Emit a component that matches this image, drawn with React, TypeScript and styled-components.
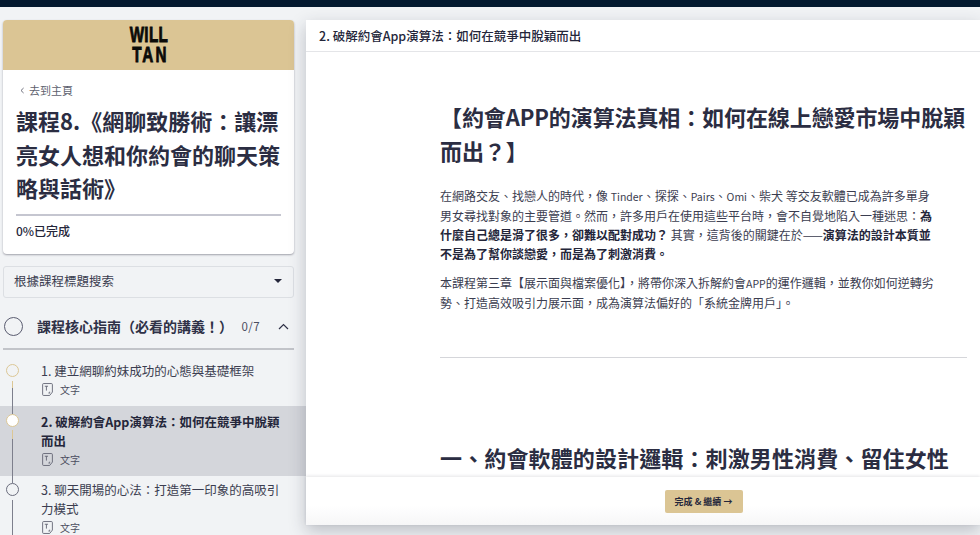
import React from 'react'
import styled, { createGlobalStyle } from 'styled-components'

const CJK = `"Noto Sans CJK TC", "Noto Sans", sans-serif`
const gold = '#dbc594'
const ink = '#2b2d42'

const GlobalStyle = createGlobalStyle`
  html, body, #root {
    margin: 0;
    height: 100%;
    overflow: hidden;
  }
  body {
    background: #f1f3f5;
    font-family: ${CJK};
    color: ${ink};
  }
  * { box-sizing: border-box; }
`

const Page = styled.div`
  height: 535px;
  display: flex;
  flex-direction: column;
  overflow: hidden;
`

const TopBar = styled.div`
  height: 7px;
  flex: none;
  background: #03192f;
`

const Columns = styled.div`
  flex: 1;
  min-height: 0;
  display: flex;
  gap: 12px;
  padding: 13px 0 0 3px;
`

const Sidebar = styled.aside`
  width: 291px;
  flex: none;
  display: flex;
  flex-direction: column;
`

const CourseCard = styled.section`
  height: 234px;
  flex: none;
  background: #fff;
  border-radius: 4px;
  overflow: hidden;
  box-shadow: 0 1px 2px rgba(40, 42, 60, 0.4);
`

const Brand = styled.div`
  height: 50px;
  background: ${gold};
  display: flex;
  flex-direction: column;
  justify-content: center;
  align-items: center;
`

const LogoLine = styled.div<{ $spacing: number }>`
  font-family: "Liberation Sans", sans-serif;
  font-weight: 700;
  font-size: 22px;
  line-height: 20px;
  color: #0b0b08;
  letter-spacing: ${({ $spacing }) => $spacing}px;
  margin-right: -${({ $spacing }) => $spacing}px;
  -webkit-text-stroke: 0.9px #0b0b08;
  transform: scaleX(0.69);
`

const CardBody = styled.div`
  padding: 11px 13px 0;
`

const BackLink = styled.div`
  display: flex;
  align-items: center;
  gap: 3px;
  padding-left: 3px;
  font-size: 11px;
  line-height: 18px;
  color: #5d5f6e;
`

const CourseTitle = styled.h1`
  margin: 5px 0 0;
  font-size: 22px;
  line-height: 33.5px;
  font-weight: 700;
  color: ${ink};
`

const ProgressTrack = styled.div`
  height: 2px;
  margin-top: 9px;
  background: #c5c6d0;
`

const ProgressLabel = styled.div`
  margin-top: 5px;
  font-size: 12px;
  line-height: 20px;
  font-weight: 500;
  color: #24263a;
`

const SearchBox = styled.div`
  height: 32px;
  flex: none;
  margin-top: 12px;
  padding: 0 10px 3px;
  display: flex;
  align-items: center;
  justify-content: space-between;
  border: 1px solid #dcdfe3;
  border-radius: 3px;
  font-size: 12.5px;
  color: #3b3d50;
`

const Caret = styled.span`
  width: 0;
  height: 0;
  margin-right: 1px;
  border-left: 4px solid transparent;
  border-right: 4px solid transparent;
  border-top: 4px solid #24263a;
`

const SectionHeader = styled.div`
  height: 52px;
  flex: none;
  display: flex;
  align-items: center;
  border-bottom: 2px solid #c2c4c9;
  padding: 10px 5px 4px 1px;
`

const SectionRing = styled.span`
  width: 19px;
  height: 19px;
  flex: none;
  border: 1.5px solid #5a5c70;
  border-radius: 50%;
`

const SectionTitle = styled.span`
  margin-left: 14px;
  font-size: 14px;
  font-weight: 700;
  white-space: nowrap;
  color: #2f3147;
`

const SectionCount = styled.span`
  margin-left: auto;
  margin-right: 18px;
  font-size: 11.5px;
  letter-spacing: 0.4px;
  color: #4b4d60;
`

const Lesson = styled.div<{ $active?: boolean; $height: number }>`
  height: ${({ $height }) => $height}px;
  flex: none;
  margin: 0 -12px 0 -3px;
  display: flex;
  background: ${({ $active }) => ($active ? '#d4d6db' : 'transparent')};
`

const Rail = styled.div`
  width: 25px;
  flex: none;
  display: flex;
  flex-direction: column;
  align-items: center;
`

const RailStub = styled.span<{ $h: number; $hidden?: boolean }>`
  width: 1px;
  height: ${({ $h }) => $h}px;
  flex: none;
  background: ${({ $hidden }) => ($hidden ? 'transparent' : '#7d7f8c')};
`

const Dot = styled.span<{ $state: 'open' | 'current' | 'todo' }>`
  width: 13px;
  height: 13px;
  flex: none;
  border-radius: 50%;
  border: 1.5px solid ${({ $state }) => ($state === 'todo' ? '#6b6d7d' : '#dcc795')};
  background: ${({ $state }) => ($state === 'current' ? '#fff' : 'transparent')};
`

const RailLine = styled.span<{ $gap: number; $accent: number }>`
  width: 1px;
  flex: 1;
  margin-top: ${({ $gap }) => $gap}px;
  background: linear-gradient(
    #dcc795 ${({ $accent }) => $accent}px,
    #7d7f8c ${({ $accent }) => $accent}px
  );
`

const LessonBody = styled.div<{ $top: number }>`
  flex: 1;
  min-width: 0;
  padding: ${({ $top }) => $top}px 22px 0 16px;
`

const LessonName = styled.div<{ $active?: boolean }>`
  font-size: 12.5px;
  line-height: 19px;
  font-weight: ${({ $active }) => ($active ? 700 : 400)};
  color: ${({ $active }) => ($active ? '#24263a' : '#3b3d50')};
`

const LessonMeta = styled.div`
  margin-top: 2px;
  padding-left: 1px;
  display: flex;
  align-items: center;
  gap: 7px;
  font-size: 10px;
  line-height: 15px;
  color: #4b4d60;
`

const Main = styled.main`
  flex: 1;
  min-width: 0;
  height: 505px;
  display: flex;
  flex-direction: column;
  background: #fff;
  box-shadow: 0 6px 16px rgba(40, 42, 60, 0.26);
`

const MainHeader = styled.header`
  height: 32px;
  flex: none;
  padding: 0 13px;
  display: flex;
  align-items: center;
  border-bottom: 1px solid #e4e5e8;
  font-size: 12.5px;
  font-weight: 500;
  color: #24263a;
`

const Article = styled.article`
  flex: 1;
  min-height: 0;
  overflow: hidden;
  padding: 47px 13px 0 134px;
`

const ArticleTitle = styled.h2`
  margin: 0;
  font-size: 22px;
  line-height: 34px;
  font-weight: 700;
  letter-spacing: -0.1px;
  white-space: nowrap;
  color: ${ink};
`

const Paragraph = styled.p`
  margin: 0;
  font-size: 12px;
  line-height: 19px;
  white-space: nowrap;
  color: #3b3d50;
  & + & { margin-top: 10px; }
  strong { font-weight: 700; color: #24263a; }
`

const Latin = styled.span`
  font-size: 10.5px;
`

const ParagraphGroup = styled.div`
  margin-top: 19px;
`

const Rule = styled.hr`
  margin: 45px 0 0;
  border: 0;
  border-top: 1px solid #d5d6da;
`

const ChapterTitle = styled.h2`
  margin: 82px 0 0;
  font-size: 22px;
  line-height: 34px;
  font-weight: 700;
  letter-spacing: 0.13px;
  white-space: nowrap;
  color: ${ink};
`

const MainFooter = styled.footer`
  height: 48px;
  flex: none;
  padding: 0 13px 0 134px;
  display: flex;
  align-items: center;
  justify-content: center;
  background: linear-gradient(#fff 60%, #f6f6f7);
  box-shadow: 0 -1px 3px rgba(40, 42, 60, 0.12);
`

const NextButton = styled.button`
  width: 78px;
  height: 23px;
  border: 0;
  border-radius: 2px;
  background: ${gold};
  font-family: ${CJK};
  font-size: 9px;
  font-weight: 700;
  color: #24263a;
  padding: 0;
`

const DocIcon = () => (
  <svg width="11" height="13" viewBox="0 0 10 12" fill="none" stroke="#5d5f6e" strokeWidth="0.8">
    <path d="M1.4.5h7.2a.9.9 0 0 1 .9.9v7L7 11.5H1.4a.9.9 0 0 1-.9-.9V1.4a.9.9 0 0 1 .9-.9z" />
    <path d="M2.5 3h3M4 3v4M6.5 8.5h1M6.5 10v-1.5" />
  </svg>
)

const lessons = [
  { name: '1. 建立網聊約妹成功的心態與基礎框架', height: 49, top: 4, dot: 'open', gap: 4, accent: 7, lead: 7, first: true },
  { name: '2. 破解約會App演算法：如何在競爭中脫穎而出', height: 70, top: 6, dot: 'current', gap: 3, accent: 9, lead: 8, active: true },
  { name: '3. 聊天開場的心法：打造第一印象的高吸引力模式', height: 70, top: 4, dot: 'todo', gap: 4, accent: 0, lead: 7 },
] as const

export default function App() {
  return (
    <>
      <GlobalStyle />
      <Page>
        <TopBar />
        <Columns>
          <Sidebar>
            <CourseCard>
              <Brand>
                <LogoLine $spacing={0.5}>WILL</LogoLine>
                <LogoLine $spacing={3}>TAN</LogoLine>
              </Brand>
              <CardBody>
                <BackLink>
                  <svg width="7" height="7" viewBox="0 0 7 7" fill="none" stroke="#5d5f6e" strokeWidth="0.9">
                    <path d="M4.6 1 2 3.5 4.6 6" />
                  </svg>
                  去到主頁
                </BackLink>
                <CourseTitle>課程8.《網聊致勝術：讓漂亮女人想和你約會的聊天策略與話術》</CourseTitle>
                <ProgressTrack />
                <ProgressLabel>0%已完成</ProgressLabel>
              </CardBody>
            </CourseCard>
            <SearchBox>
              根據課程標題搜索
              <Caret />
            </SearchBox>
            <SectionHeader>
              <SectionRing />
              <SectionTitle>課程核心指南（必看的講義！）</SectionTitle>
              <SectionCount>0/7</SectionCount>
              <svg width="11" height="7" viewBox="0 0 11 7" fill="none" stroke="#2f3147" strokeWidth="1.2">
                <path d="M1 6l4.5-4.5L10 6" />
              </svg>
            </SectionHeader>
            <Lesson $height={7} />
            {lessons.map((item) => (
              <Lesson key={item.name} $active={'active' in item} $height={item.height}>
                <Rail>
                  <RailStub $h={item.lead} $hidden={'first' in item} />
                  <Dot $state={item.dot} />
                  <RailLine $gap={item.gap} $accent={item.accent} />
                </Rail>
                <LessonBody $top={item.top}>
                  <LessonName $active={'active' in item}>{item.name}</LessonName>
                  <LessonMeta>
                    <DocIcon />
                    文字
                  </LessonMeta>
                </LessonBody>
              </Lesson>
            ))}
          </Sidebar>
          <Main>
            <MainHeader>2. 破解約會App演算法：如何在競爭中脫穎而出</MainHeader>
            <Article>
              <ArticleTitle>
                【約會APP的演算法真相：如何在線上戀愛市場中脫穎
                <br />
                而出？】
              </ArticleTitle>
              <ParagraphGroup>
                <Paragraph>
                  在網路交友、找戀人的時代，像 <Latin>Tinder</Latin>、探探、<Latin>Pairs</Latin>、<Latin>Omi</Latin>、柴犬 等交友軟體已成為許多單身
                  <br />
                  男女尋找對象的主要管道。然而，許多用戶在使用這些平台時，會不自覺地陷入一種迷思：
                  <strong>為</strong>
                  <br />
                  <strong>什麼自己總是滑了很多，卻難以配對成功？</strong> 其實，這背後的關鍵在於——
                  <strong>演算法的設計本質並</strong>
                  <br />
                  <strong>不是為了幫你談戀愛，而是為了刺激消費。</strong>
                </Paragraph>
                <Paragraph>
                  本課程第三章【展示面與檔案優化】，將帶你深入拆解約會<Latin>APP</Latin>的運作邏輯，並教你如何逆轉劣
                  <br />
                  勢、打造高效吸引力展示面，成為演算法偏好的「系統金牌用戶」。
                </Paragraph>
              </ParagraphGroup>
              <Rule />
              <ChapterTitle>一、約會軟體的設計邏輯：刺激男性消費、留住女性</ChapterTitle>
            </Article>
            <MainFooter>
              <NextButton>完成 &amp; 繼續 →</NextButton>
            </MainFooter>
          </Main>
        </Columns>
      </Page>
    </>
  )
}
